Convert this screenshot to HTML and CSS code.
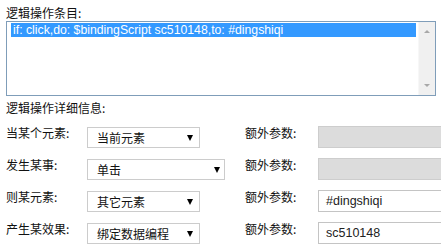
FILE: index.html
```html
<!DOCTYPE html>
<html lang="zh-CN">
<head>
<meta charset="utf-8">
<title>逻辑操作</title>
<link rel="stylesheet" href="styles.css">
</head>
<body>
<div class="page">
  <div class="heading">逻辑操作条目:</div>
  <div class="listbox">
    <div class="list-items">
      <div class="list-item selected">if: click,do: $bindingScript sc510148,to: #dingshiqi</div>
    </div>
    <div class="scrollbar">
      <span class="sb-arrow up"></span>
      <span class="sb-arrow down"></span>
    </div>
  </div>
  <div class="heading heading-detail">逻辑操作详细信息:</div>
  <div class="form">
    <div class="label">当某个元素:</div>
    <div class="select"><span>当前元素</span><i class="caret"></i></div>
    <div class="label">额外参数:</div>
    <div class="input disabled"></div>

    <div class="label">发生某事:</div>
    <div class="select wide"><span>单击</span><i class="caret"></i></div>
    <div class="label">额外参数:</div>
    <div class="input disabled"></div>

    <div class="label">则某元素:</div>
    <div class="select"><span>其它元素</span><i class="caret"></i></div>
    <div class="label">额外参数:</div>
    <div class="input">#dingshiqi</div>

    <div class="label">产生某效果:</div>
    <div class="select"><span>绑定数据编程</span><i class="caret"></i></div>
    <div class="label">额外参数:</div>
    <div class="input">sc510148</div>
  </div>
</div>
</body>
</html>
```

FILE: styles.css
```css
html, body {
  margin: 0;
  padding: 0;
  background: #ffffff;
  overflow: hidden;
}

.page {
  width: 441px;
  height: 250px;
  overflow: hidden;
  padding-left: 6px;
  box-sizing: border-box;
  font-family: "Noto Sans CJK SC", "Liberation Sans", sans-serif;
  font-size: 12px;
  color: #111;
}

.heading {
  padding-top: 5px;
  line-height: 16px;
  height: 16px;
  white-space: nowrap;
}

.listbox {
  width: 430px;
  height: 75px;
  box-sizing: border-box;
  border: 1px solid #7f9db9;
  display: flex;
  background: #fff;
}

.list-items {
  flex: 1;
  padding: 1px 2px 0 4px;
}

.list-item {
  height: 14px;
  line-height: 14px;
  font-family: "Liberation Sans", Arial, sans-serif;
  font-size: 12.25px;
  padding-left: 2px;
  white-space: nowrap;
  overflow: hidden;
}

.list-item.selected {
  background: #3399ff;
  color: #fff;
}

.scrollbar {
  width: 16px;
  background: #f0f0f0;
  border-left: 1px solid #f7f7f7;
  display: flex;
  flex-direction: column;
  justify-content: space-between;
  align-items: center;
  padding: 8px 0 8px;
}

.sb-arrow {
  width: 0;
  height: 0;
  border-left: 3px solid transparent;
  border-right: 3px solid transparent;
}

.sb-arrow.up {
  border-bottom: 3px solid #a8a8a8;
}

.sb-arrow.down {
  border-top: 3px solid #a8a8a8;
}

.heading-detail {
  padding-top: 4px;
}

.form {
  margin-top: 10px;
  display: grid;
  grid-template-columns: 81px 158px 73px 150px;
  grid-auto-rows: 22px;
  row-gap: 10px;
}

.label {
  line-height: 14px;
  white-space: nowrap;
  color: #111;
}

.select {
  width: 113px;
  height: 21px;
  margin-top: 1px;
  box-sizing: border-box;
  border: 1px solid #cccccc;
  background: #fff;
  display: flex;
  align-items: center;
  justify-content: space-between;
  padding: 0 6px 0 9px;
  font-size: 12px;
  line-height: 19px;
}

.select.wide {
  width: 138px;
  padding-right: 4px;
}

.caret {
  width: 0;
  height: 0;
  border-left: 3px solid transparent;
  border-right: 3px solid transparent;
  border-top: 6px solid #000;
}

.input {
  width: 150px;
  height: 22px;
  box-sizing: border-box;
  border: 1px solid #c4c4c4;
  background: #fff;
  padding-left: 7px;
  font-family: "Liberation Sans", Arial, sans-serif;
  font-size: 12.5px;
  line-height: 20px;
  color: #222;
  white-space: nowrap;
}

.input.disabled {
  background: #dcdcdc;
  border-color: #cdcdcd;
}
```
